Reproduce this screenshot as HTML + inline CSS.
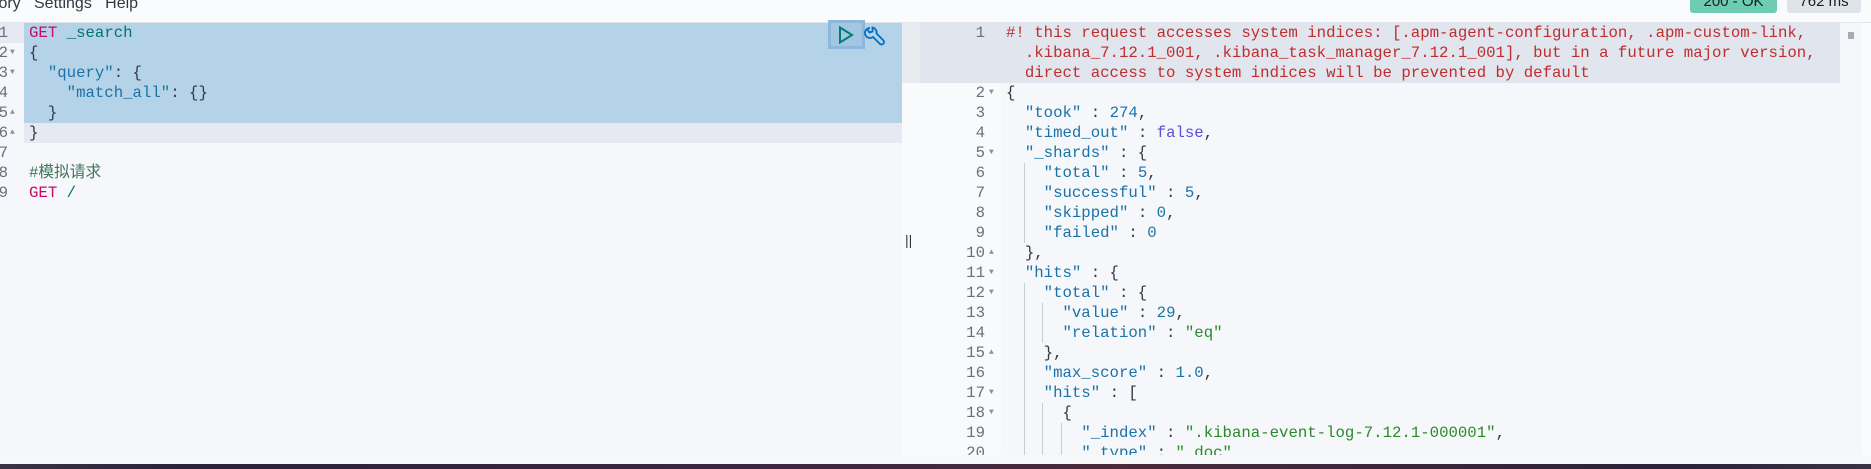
<!DOCTYPE html>
<html><head><meta charset="utf-8"><style>
*{margin:0;padding:0;box-sizing:border-box}
body{width:1871px;height:469px;overflow:hidden;background:#fafbfd;position:relative;font-family:"Liberation Mono","Noto Sans CJK SC",monospace}
.abs{position:absolute}
.code{font-family:"Liberation Mono","Noto Sans CJK SC",monospace;font-size:15.7px;line-height:20px;white-space:pre}
.ln{position:absolute;text-align:right;color:#69707d;font-size:15.7px;line-height:20px;font-family:"Liberation Mono",monospace}
.fa{position:absolute;font-size:8px;color:#8a8f99;line-height:20px}
.k{color:#c80a68}.t{color:#00756c}.v{color:#1a72a8}.n{color:#1a72a8}.s{color:#2a8a2a}.b{color:#5a4fd9}.c{color:#41755c}.r{color:#c12d2d}.p{color:#343741}
.guide{position:absolute;width:1px;background:#c8ccd4}
</style></head><body>
<div class="abs" style="left:0;top:0;width:1871px;height:23px;background:#fafbfd;border-bottom:1px solid #e3e6ec"></div>
<div class="abs" style="left:-6px;top:-5px;font-family:'Liberation Sans',sans-serif;font-size:16px;color:#343741;white-space:pre">tory   Settings   Help</div>
<div class="abs" style="left:1690px;top:-6px;width:87px;height:19px;background:#6dccb1;border-radius:3px;font-family:'Liberation Sans',sans-serif;font-size:15px;color:#1a1c21;text-align:center;line-height:16px">200 - OK</div>
<div class="abs" style="left:1787px;top:-6px;width:74px;height:19px;background:#dfe3ea;border-radius:3px;font-family:'Liberation Sans',sans-serif;font-size:15px;color:#1a1c21;text-align:center;line-height:16px">762 ms</div>

<div class="abs" style="left:0;top:23px;width:902px;height:432px;background:#f5f7fa"></div>
<div class="abs" style="left:24px;top:23px;width:878px;height:100px;background:#b4d3e8"></div>
<div class="abs" style="left:24px;top:123px;width:878px;height:20px;background:#e6e9f1"></div>
<div class="abs" style="left:0;top:23px;width:24px;height:20px;background:#e6e9f1"></div>
<div class="abs" style="left:902px;top:23px;width:18px;height:432px;background:#f9fafc"></div>
<div class="abs" style="left:902px;top:23px;width:18px;height:60px;background:#e8ebf0"></div>
<div class="ln" style="left:-10px;top:23px;width:18px">1<br>2<br>3<br>4<br>5<br>6<br>7<br>8<br>9</div>
<div class="fa" style="left:10px;top:43px">▼</div><div class="fa" style="left:10px;top:63px">▼</div>
<div class="fa" style="left:10px;top:103px">▲</div><div class="fa" style="left:10px;top:123px">▲</div>
<div class="guide" style="left:47px;top:83px;height:20px"></div>
<div class="code abs" style="left:29px;top:23px"><span class="k">GET</span> <span class="t">_search</span>
<span class="p">{</span>
  <span class="v">"query"</span><span class="p">: {</span>
    <span class="v">"match_all"</span><span class="p">: {}</span>
  <span class="p">}</span>
<span class="p">}</span>

<span class="c">#模拟请求</span>
<span class="k">GET</span> <span class="t">/</span></div>
<div class="abs" style="left:828px;top:20px;width:37px;height:29px;background:#a3c6e3;border:3px solid #8db8dc"></div>
<svg class="abs" style="left:838px;top:26px" width="16" height="18" viewBox="0 0 16 18"><path d="M2 1.5 L14 9 L2 16.5 Z" fill="none" stroke="#017d73" stroke-width="2"/></svg>
<svg class="abs" style="left:863px;top:26px" width="22" height="22" viewBox="0 0 22 22"><path d="M7 2 a5 5 0 1 0 3 9 l7 7 a2.5 2.5 0 0 0 3.5-3.5 l-7-7 a5 5 0 0 0-4-6 l0 4 -3 1 -2-3" fill="none" stroke="#0071c2" stroke-width="1.8"/></svg>
<div class="abs" style="left:905px;top:232px;font-family:'Liberation Sans',sans-serif;font-size:14px;color:#343741">||</div>

<div class="abs" style="left:920px;top:23px;width:941px;height:432px;background:#f5f7fa"></div>
<div class="abs" style="left:920px;top:23px;width:81px;height:432px;background:#f9fafc"></div>
<div class="abs" style="left:920px;top:23px;width:920px;height:60px;background:#e0e5ee"></div>
<div class="abs" style="left:1848px;top:32px;width:6px;height:7px;background:#a8adb5"></div>
<div class="ln" style="left:940px;top:23px;width:45px">1<br><br><br>2<br>3<br>4<br>5<br>6<br>7<br>8<br>9<br>10<br>11<br>12<br>13<br>14<br>15<br>16<br>17<br>18<br>19<br>20</div>
<div class="fa" style="left:989px;top:83px">▼</div><div class="fa" style="left:989px;top:143px">▼</div>
<div class="fa" style="left:989px;top:243px">▲</div><div class="fa" style="left:989px;top:263px">▼</div>
<div class="fa" style="left:989px;top:283px">▼</div><div class="fa" style="left:989px;top:343px">▲</div>
<div class="fa" style="left:989px;top:383px">▼</div><div class="fa" style="left:989px;top:403px">▼</div>
<div class="guide" style="left:1024px;top:163px;height:80px"></div>
<div class="guide" style="left:1024px;top:283px;height:172px"></div>
<div class="guide" style="left:1042px;top:303px;height:40px"></div>
<div class="guide" style="left:1042px;top:403px;height:52px"></div>
<div class="guide" style="left:1061px;top:423px;height:32px"></div>
<div class="code abs" style="left:1006px;top:23px;width:850px;height:432px;overflow:hidden"><span class="r">#! this request accesses system indices: [.apm-agent-configuration, .apm-custom-link,</span>
<span class="r">  .kibana_7.12.1_001, .kibana_task_manager_7.12.1_001], but in a future major version,</span>
<span class="r">  direct access to system indices will be prevented by default</span>
<span class="p">{</span>
  <span class="v">"took"</span> <span class="p">:</span> <span class="n">274</span><span class="p">,</span>
  <span class="v">"timed_out"</span> <span class="p">:</span> <span class="b">false</span><span class="p">,</span>
  <span class="v">"_shards"</span> <span class="p">: {</span>
    <span class="v">"total"</span> <span class="p">:</span> <span class="n">5</span><span class="p">,</span>
    <span class="v">"successful"</span> <span class="p">:</span> <span class="n">5</span><span class="p">,</span>
    <span class="v">"skipped"</span> <span class="p">:</span> <span class="n">0</span><span class="p">,</span>
    <span class="v">"failed"</span> <span class="p">:</span> <span class="n">0</span>
  <span class="p">},</span>
  <span class="v">"hits"</span> <span class="p">: {</span>
    <span class="v">"total"</span> <span class="p">: {</span>
      <span class="v">"value"</span> <span class="p">:</span> <span class="n">29</span><span class="p">,</span>
      <span class="v">"relation"</span> <span class="p">:</span> <span class="s">"eq"</span>
    <span class="p">},</span>
    <span class="v">"max_score"</span> <span class="p">:</span> <span class="n">1.0</span><span class="p">,</span>
    <span class="v">"hits"</span> <span class="p">: [</span>
      <span class="p">{</span>
        <span class="v">"_index"</span> <span class="p">:</span> <span class="s">".kibana-event-log-7.12.1-000001"</span><span class="p">,</span>
        <span class="v">"_type"</span> <span class="p">:</span> <span class="s">"_doc"</span><span class="p">,</span></div>

<div class="abs" style="left:0;top:455px;width:1871px;height:9px;background:#f7f8fa"></div>
<div class="abs" style="left:0;top:464px;width:1871px;height:5px;background:linear-gradient(90deg,#3a3345,#2a2238 10%,#3b2640 40%,#4a2a3c 60%,#2a2238 90%,#3a3345)"></div>
</body></html>
